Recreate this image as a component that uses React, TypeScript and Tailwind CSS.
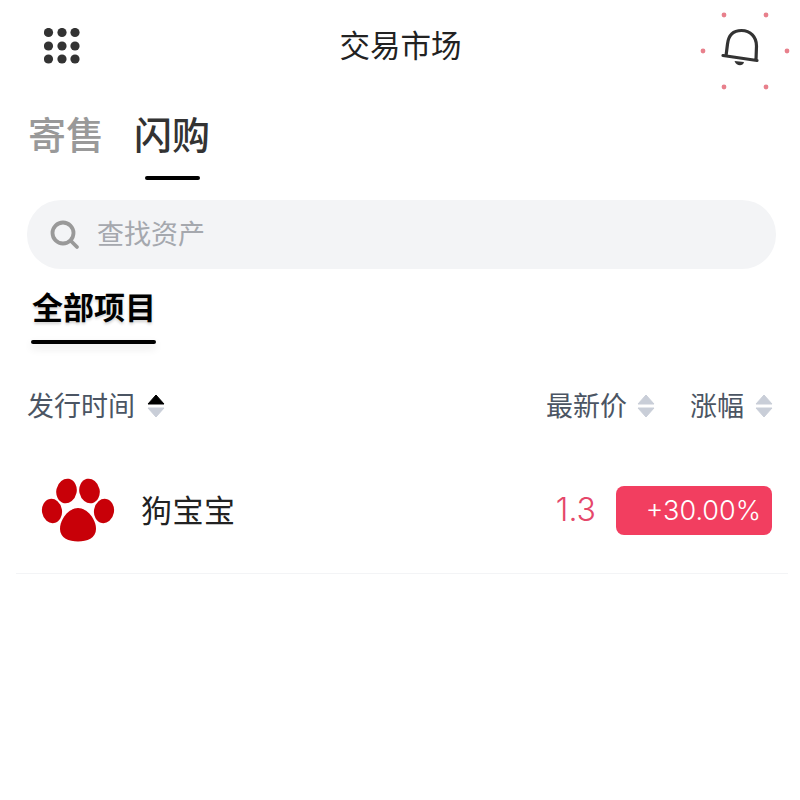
const SortArrows = ({ active = false }: { active?: boolean }) => (
  <svg width="18" height="24" viewBox="0 0 18 24" className="shrink-0">
    <path d="M9 1 L17 10 H1 Z" fill={active ? "#000000" : "#c9ced8"} stroke={active ? "#000000" : "#c9ced8"} strokeLinejoin="round" />
    <path d="M1 14 H17 L9 23 Z" fill="#c9ced8" stroke="#c9ced8" strokeLinejoin="round" />
  </svg>
);

const GridDots = () => (
  <svg width="36" height="36" viewBox="0 0 36 36">
    {[4.5, 18, 31].map((cy) =>
      [4.5, 18, 31].map((cx) => <circle key={`${cx}-${cy}`} cx={cx} cy={cy} r="4.6" fill="#333333" />),
    )}
  </svg>
);

// bell with the ring of small dots around it
const Bell = () => (
  <svg width="92" height="92" viewBox="0 0 92 92">
    {[
      [26, 15],
      [68, 15],
      [5, 51],
      [89, 51],
      [26, 87],
      [68, 87],
    ].map(([cx, cy]) => (
      <circle key={`${cx}-${cy}`} cx={cx} cy={cy} r="2.4" fill="#e8808c" />
    ))}
    <path
      d="M25 55.5 L59 60.5 M28 56 L29.5 44 C30.5 35 35 30.5 43.5 30.5 C52.5 30.5 58.5 37 58.5 46 L58 60"
      fill="none"
      stroke="#333333"
      strokeWidth="3.2"
      strokeLinecap="round"
      strokeLinejoin="round"
    />
    <path d="M36.5 61 L46 62 C45 66.5 38.5 66.5 36.5 61 Z" fill="#333333" />
  </svg>
);

const Paw = () => (
  <svg width="76" height="66" viewBox="0 0 76 66">
    <g fill="#c80008">
      <ellipse cx="11" cy="34" rx="10" ry="12.2" transform="rotate(-10 11 34)" />
      <ellipse cx="25.5" cy="14" rx="10.2" ry="12.4" transform="rotate(12 25.5 14)" />
      <ellipse cx="48.5" cy="14" rx="10.2" ry="12.4" transform="rotate(-12 48.5 14)" />
      <ellipse cx="63" cy="34" rx="10" ry="12.2" transform="rotate(10 63 34)" />
      <path d="M37 31 C46 31 55 42 55 52 C55 61 46 64.5 37 64.5 C28 64.5 19 61 19 52 C19 42 28 31 37 31 Z" />
    </g>
  </svg>
);

export default function App() {
  return (
    <div className="h-[800px] w-[800px] overflow-hidden bg-white font-['Inter','Noto_Sans_CJK_SC',sans-serif]">
      <header className="flex h-[92px] items-center justify-between pl-[44px] pr-[10px]">
        <GridDots />
        <h1 className="ml-[23px] text-[30.5px] font-normal leading-none text-[#222222]">交易市场</h1>
        <Bell />
      </header>

      <div className="flex gap-[30px] pl-[28px]">
        <div className="pt-[18px] text-[38px] font-medium leading-[50px] text-[#999999]">寄售</div>
        <div className="flex flex-col items-center pt-[18px]">
          <span className="text-[38px] font-medium leading-[50px] text-[#333333]">闪购</span>
          <span className="mt-[16px] h-[4px] w-[55px] rounded-full bg-black" />
        </div>
      </div>

      <div className="ml-[27px] mr-[24px] mt-[20px] flex h-[69px] items-center rounded-[34px] bg-[#f3f4f6] pl-[23px]">
        <svg width="30" height="30" viewBox="0 0 30 30" fill="none" stroke="#999999" strokeWidth="3.8">
          <circle cx="13" cy="13" r="10.5" />
          <path d="M21 21 L27 27" strokeLinecap="round" />
        </svg>
        <span className="ml-[17px] text-[27px] leading-none text-[#a5a8ae]">查找资产</span>
      </div>

      <div className="mt-[18px] w-fit pl-[31px]">
        <div className="pl-[1px] text-[31px] font-bold leading-[42px] text-black [text-shadow:0_2px_3px_rgba(0,0,0,0.18)]">
          全部项目
        </div>
        <div className="mt-[11px] h-[4px] w-[125px] rounded-full bg-black shadow-[0_4px_8px_rgba(0,0,0,0.12)]" />
      </div>

      <div className="mt-[40px] flex h-[44px] items-center pl-[27px] pr-[27px] text-[27px] text-[#4b5563]">
        <span className="leading-none">发行时间</span>
        <span className="ml-[12px] flex">
          <SortArrows active />
        </span>
        <span className="ml-auto leading-none">最新价</span>
        <span className="ml-[10px] flex">
          <SortArrows />
        </span>
        <span className="ml-[35px] leading-none">涨幅</span>
        <span className="ml-[11px] flex">
          <SortArrows />
        </span>
      </div>

      <div className="ml-[16px] mr-[12px] mt-[33px] flex h-[113px] items-center border-b border-[#f3f4f6] pb-[14px] pl-[25px] pr-[16px]">
        <Paw />
        <span className="ml-[24px] text-[31px] leading-none tracking-[0.5px] text-[#222222]">狗宝宝</span>
        <span className="ml-auto text-[32px] font-[350] leading-none text-[#e5476a]">1.3</span>
        <span className="ml-[20px] flex h-[49px] w-[156px] items-center justify-end rounded-[8px] bg-[#f23e60] pr-[11px] text-[27px] font-[350] leading-none text-white">
          +30.00%
        </span>
      </div>
    </div>
  );
}
